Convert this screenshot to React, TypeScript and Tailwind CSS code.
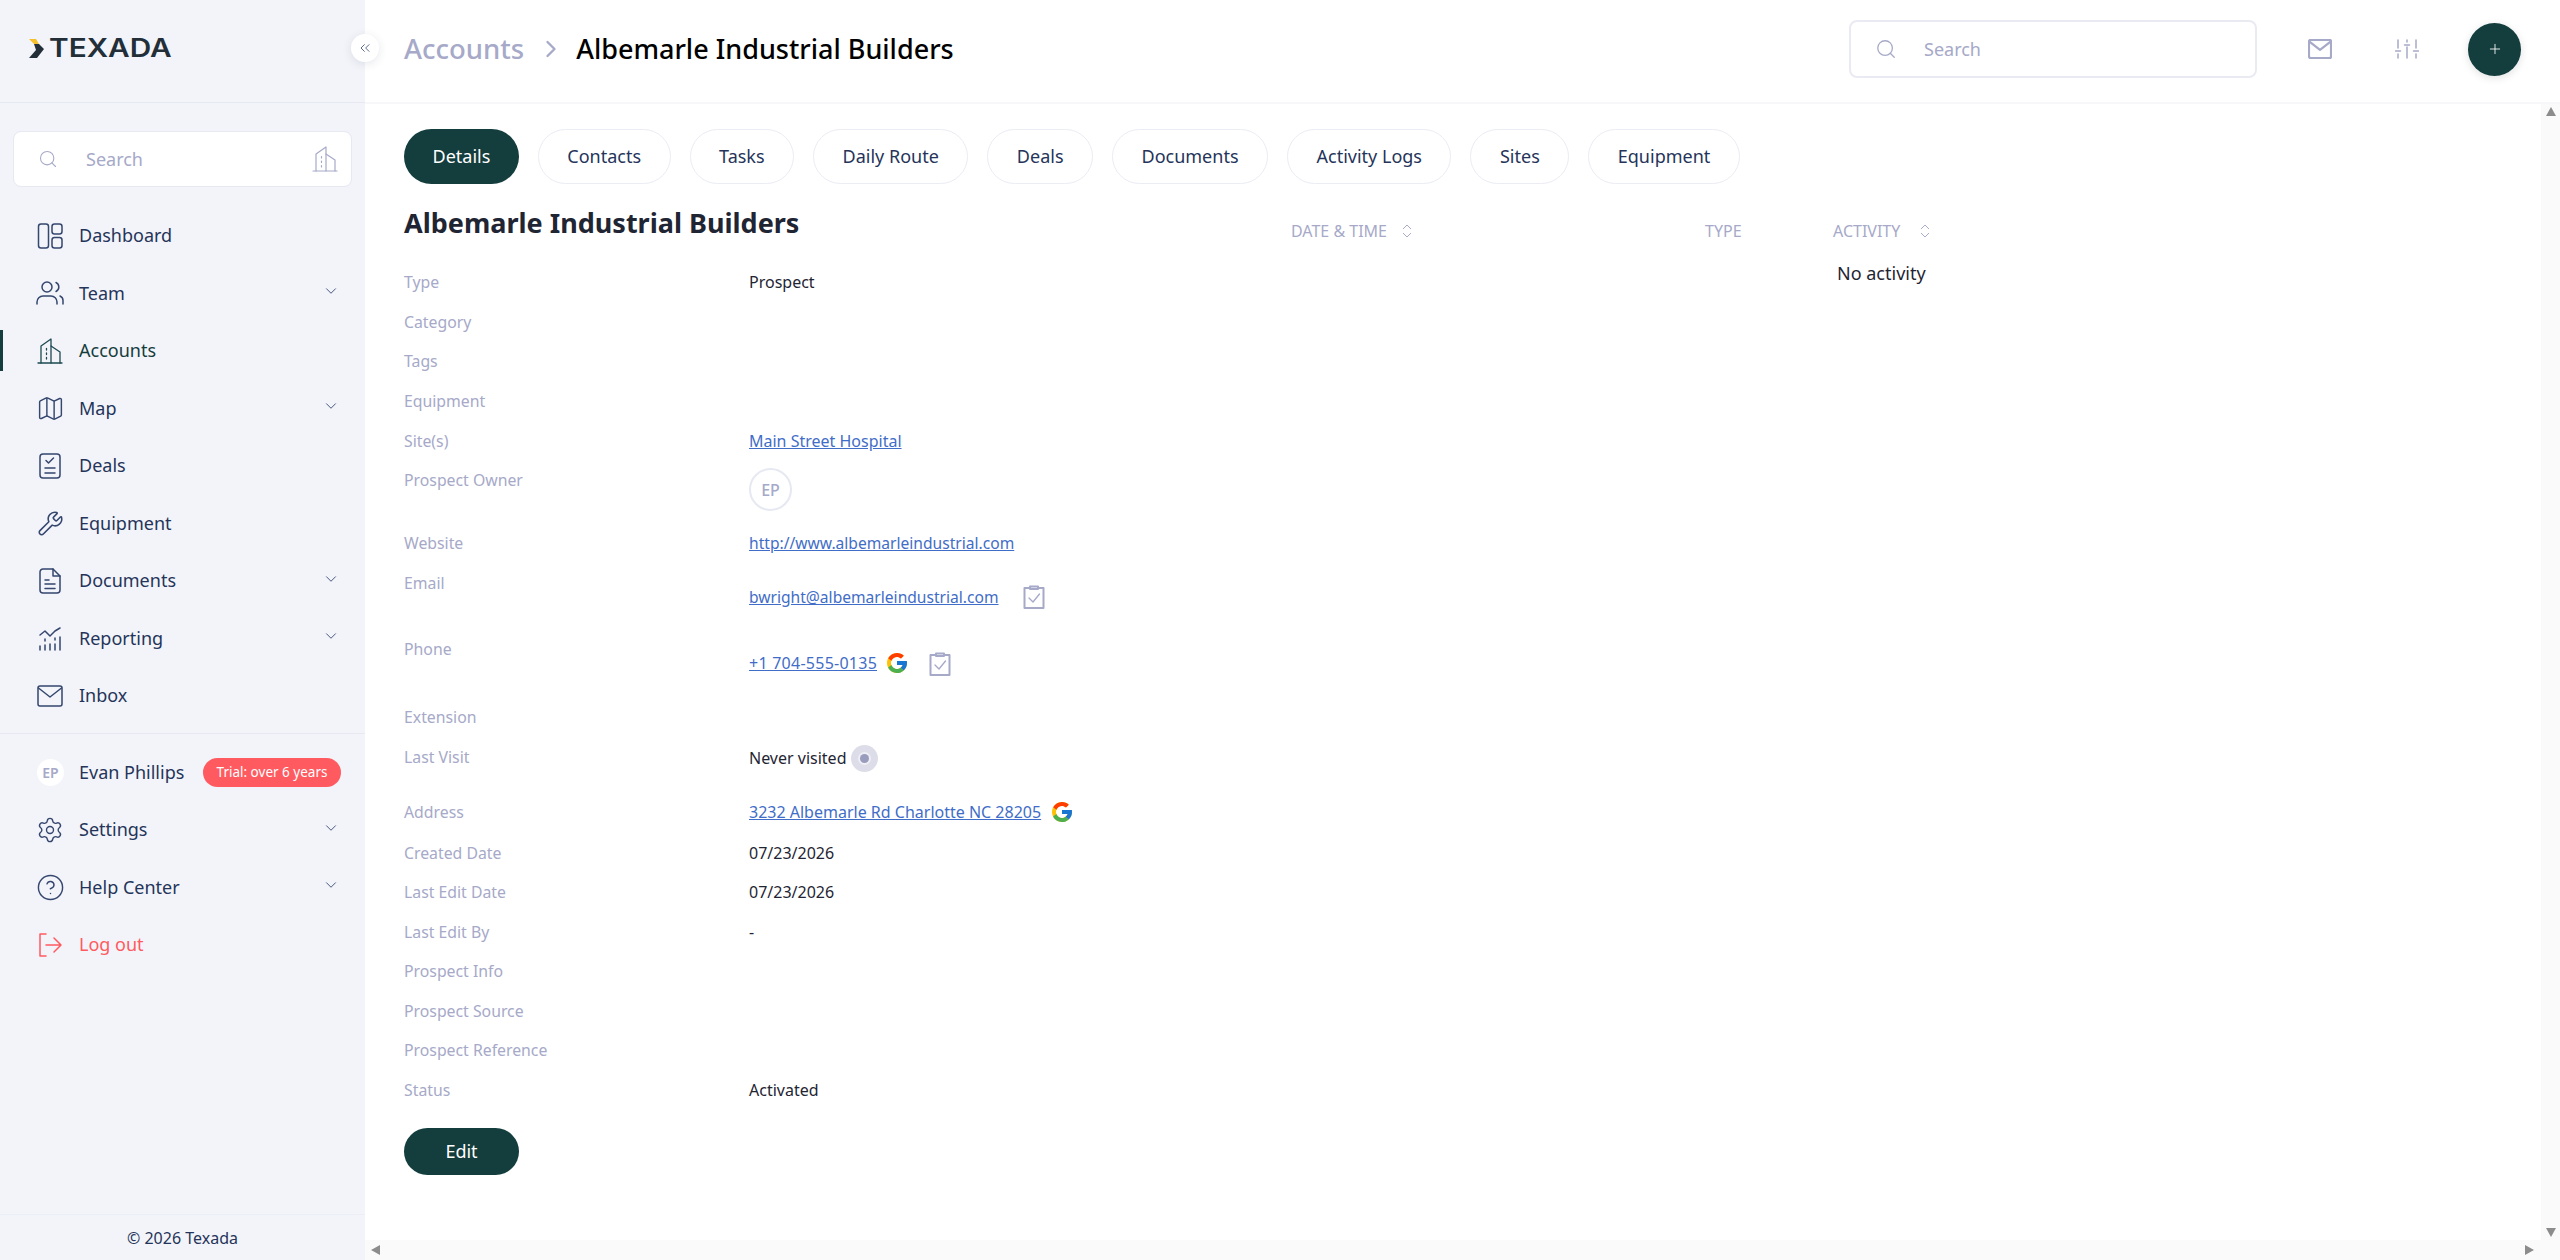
import { ChevronDown, ChevronRight, ChevronsLeft, ChevronsUpDown, CircleHelp, Map as MapIcon, Plus, Search, Settings, Wrench } from "lucide-react";
import type { ReactNode } from "react";
import { FcGoogle } from "react-icons/fc";

const ink = "#35466f";

function Svg({ w = 26, h = 26, children, color = ink, sw = 1.5 }: { w?: number; h?: number; children: ReactNode; color?: string; sw?: number }) {
  return (
    <svg width={w} height={h} viewBox={`0 0 ${w} ${h}`} fill="none" stroke={color} strokeWidth={sw} strokeLinecap="round" strokeLinejoin="round">
      {children}
    </svg>
  );
}

function DashboardIcon() {
  return (
    <Svg>
      <rect x="1.5" y="1" width="10" height="24" rx="2.5" />
      <rect x="15" y="1" width="10" height="10" rx="2.5" />
      <rect x="15" y="14.5" width="10" height="10.5" rx="2.5" />
    </Svg>
  );
}

function TeamIcon() {
  return (
    <Svg w={28} h={24}>
      <circle cx="11" cy="6" r="5" />
      <path d="M1 23v-2a6 6 0 0 1 6-6h8a6 6 0 0 1 6 6v2" />
      <path d="M20 1.5a5 5 0 0 1 0 9" />
      <path d="M24 15a5 5 0 0 1 3 5v3" />
    </Svg>
  );
}

function BuildingIcon({ color = "#1d4a52", sw = 1.3 }: { color?: string; sw?: number }) {
  return (
    <Svg color={color} sw={sw}>
      <path d="M1 25h24" />
      <path d="M4 25V8l10-7v24" />
      <path d="M14 8l9 6v11" />
      <path d="M9.500 10.500v1.500M9.500 15v1.500M9.500 19.500v1.500" />
    </Svg>
  );
}

function DealsIcon() {
  return (
    <Svg>
      <rect x="3" y="1" width="20" height="24" rx="3" />
      <path d="M9 7.500l2.500 2.500 5-5" />
      <path d="M8 15h10M8 20h10" />
    </Svg>
  );
}

function DocumentIcon() {
  return (
    <Svg>
      <path d="M6 1h10l7 7v14a3 3 0 0 1-3 3H6a3 3 0 0 1-3-3V4a3 3 0 0 1 3-3z" />
      <path d="M16 1v7h7" />
      <path d="M8 12h4M8 16h10M8 20.500h10" />
    </Svg>
  );
}

function ReportingIcon() {
  return (
    <Svg>
      <path d="M3 9l5-4 5 5 5-5 5-3" transform="translate(0 1)" />
      <path d="M3 21v4M8 14v2M8 20v5M13 19v6M18 13v2M18 19v6M23 12v13" />
    </Svg>
  );
}

function MailIcon({ color = ink, sw = 1.5 }: { color?: string; sw?: number }) {
  return (
    <Svg w={26} h={22} color={color} sw={sw}>
      <rect x="1" y="1" width="24" height="20" rx="2" />
      <path d="M1.500 3l11.500 9 11.500-9" />
    </Svg>
  );
}

function LogoutIcon() {
  return (
    <Svg w={24} h={24} color="#ff5a5f">
      <path d="M8 1H2v22h6" />
      <path d="M8 12h15M16 5l7 7-7 7" />
    </Svg>
  );
}

function SlidersIcon() {
  return (
    <Svg w={24} h={20} color="#a6a9c8" sw={1.5}>
      <path d="M3 1v8M3 15v4M12 1v2M12 8v11M21 1v8M21 15v4" />
      <path d="M0.500 12h5M9.500 6h5M18.500 12h5" />
    </Svg>
  );
}

function ClipboardIcon() {
  return (
    <Svg w={22} h={25} color="#a6a9c8" sw={2}>
      <path d="M7 4H1.500v20h19V4H15" />
      <path d="M7 2.500h8V5H7z" />
      <path d="M6 14l4 4 6.500-8" strokeWidth="1.300" />
    </Svg>
  );
}

function Triangle({ points }: { points: string }) {
  return (
    <svg width="12" height="12" viewBox="0 0 12 12">
      <polygon points={points} fill="#8c8c8c" />
    </svg>
  );
}

const navMain = [
  { label: "Dashboard", icon: <DashboardIcon /> },
  { label: "Team", icon: <TeamIcon />, more: true },
  { label: "Accounts", icon: <BuildingIcon />, active: true },
  { label: "Map", icon: <MapIcon size={29} strokeWidth={1.2} color="#35466f" />, more: true },
  { label: "Deals", icon: <DealsIcon /> },
  { label: "Equipment", icon: <Wrench size={27} strokeWidth={1.4} color="#35466f" /> },
  { label: "Documents", icon: <DocumentIcon />, more: true },
  { label: "Reporting", icon: <ReportingIcon />, more: true },
  { label: "Inbox", icon: <MailIcon /> },
];

function NavRow({ label, icon, more, active, danger }: { label: string; icon: ReactNode; more?: boolean; active?: boolean; danger?: boolean }) {
  return (
    <a href="#" className={`relative flex h-[57.5px] items-center pl-[34px] pr-[25px] text-[18px] ${danger ? "text-[#ff5a5f]" : active ? "text-[#143d3d]" : "text-[#25345a]"}`}>
      {active && <span className="absolute left-0 top-[8px] h-[41px] w-[3px] bg-[#143d3d]" />}
      <span className="flex w-8 flex-none items-center justify-center">{icon}</span>
      <span className="ml-[13px] flex-1">{label}</span>
      {more && <ChevronDown size={18} strokeWidth={1.2} color="#35466f" className="-mt-1" />}
    </a>
  );
}

function Sidebar() {
  return (
    <aside className="relative flex h-full w-[365px] flex-none flex-col bg-[#f3f4f9]">
      <div className="flex h-[103px] flex-none items-center gap-[5px] border-b border-[#e6e8f2] pb-[6px] pl-[29px]">
        <svg width="15" height="19" viewBox="0 0 15 19">
          <polygon points="0,0 7,0 10,5 5,5" fill="#f5c02c" />
          <polygon points="5,5 10,5 15,10 8,19 0,19 7,11" fill="#232f38" />
        </svg>
        <span className="origin-left scale-x-[1.19] font-['Inter',sans-serif] text-[25px] font-semibold leading-none text-[#232f38]">TEXADA</span>
      </div>
      <button className="absolute left-[351px] top-[34px] flex h-[28px] w-[28px] items-center justify-center rounded-full bg-white shadow-[0_2px_10px_rgba(50,60,100,0.12)]">
        <ChevronsLeft size={16} strokeWidth={1.2} color="#35466f" />
      </button>
      <div className="mx-[13px] mt-[28px] flex h-[56px] flex-none items-center rounded-lg border border-[#e6e8f2] bg-white pl-[24px] pr-[13px]">
        <Search size={20} strokeWidth={1.3} color="#a6a9c8" />
        <span className="ml-[28px] flex-1 text-[18px] text-[#a6a9c8]">Search</span>
        <BuildingIcon color="#a6a9c8" sw={1.2} />
      </div>
      <nav className="mt-[20px] flex-none">
        {navMain.map((item) => (
          <NavRow key={item.label} {...item} />
        ))}
      </nav>
      <div className="mt-[8px] flex-none border-t border-[#e6e8f2] pt-[10px]">
        <div className="flex h-[57.5px] items-center pl-[37px] pr-[24px] text-[18px] text-[#25345a]">
          <span className="flex h-[27px] w-[27px] flex-none items-center justify-center rounded-full bg-white text-[14px] font-semibold text-[#a6a9c8]">EP</span>
          <span className="ml-[15px] flex-1 whitespace-nowrap">Evan Phillips</span>
          <span className="flex h-[29px] w-[138px] flex-none items-center justify-center whitespace-nowrap rounded-full bg-[#ff5a5f] text-[13.500px] text-white">Trial: over 6 years</span>
        </div>
        <NavRow label="Settings" icon={<Settings size={28} strokeWidth={1.2} color="#35466f" />} more />
        <NavRow label="Help Center" icon={<CircleHelp size={29} strokeWidth={1.2} color="#35466f" />} more />
        <NavRow label="Log out" icon={<LogoutIcon />} danger />
      </div>
      <div className="mt-auto flex h-[46px] flex-none items-center justify-center border-t border-[#eceef5] text-[16px] text-[#25345a]">© 2026 Texada</div>
    </aside>
  );
}

function Header() {
  return (
    <header className="flex h-[104px] flex-none items-center border-b-2 border-[#f7f7fa] pb-[4px] pl-[39px]">
      <span className="text-[27.500px] font-medium text-[#a6a9c8]">Accounts</span>
      <ChevronRight size={28} strokeWidth={2} color="#a6a9c8" className="ml-[13px]" />
      <span className="ml-[11px] text-[27px] font-medium text-black">Albemarle Industrial Builders</span>
      <div className="ml-auto flex items-center pr-[39px]">
        <div className="flex h-[58px] w-[408px] items-center rounded-lg border-2 border-[#eaeaf3] pl-[24px]">
          <Search size={22} strokeWidth={1.4} color="#a6a9c8" />
          <span className="ml-[27px] text-[18px] text-[#a6a9c8]">Search</span>
        </div>
        <span className="ml-[50px] block scale-[0.92]">
          <MailIcon color="#a6a9c8" sw={2.4} />
        </span>
        <span className="ml-[62px]">
          <SlidersIcon />
        </span>
        <button className="ml-[49px] flex h-[53px] w-[53px] items-center justify-center rounded-full bg-[#143d3d] shadow-[0_2px_8px_rgba(0,0,0,0.12)]">
          <Plus size={16} strokeWidth={1.3} color="white" />
        </button>
      </div>
    </header>
  );
}

const tabs = ["Details", "Contacts", "Tasks", "Daily Route", "Deals", "Documents", "Activity Logs", "Sites", "Equipment"];

function Tabs() {
  return (
    <div className="flex gap-[19px]">
      {tabs.map((tab, i) => (
        <button key={tab} className={`h-[55px] rounded-full px-[28.500px] text-[18px] ${i === 0 ? "bg-[#143d3d] text-white" : "border border-[#ebecf4] bg-white text-[#25345a]"}`}>
          {tab}
        </button>
      ))}
    </div>
  );
}

function TextLink({ children, className = "" }: { children: ReactNode; className?: string }) {
  return (
    <a href="#" className={`text-[#3f6dc7] underline ${className}`}>
      {children}
    </a>
  );
}

const rows: { label: string; h: string; value?: ReactNode }[] = [
  { label: "Type", h: "h-[39.7px]", value: "Prospect" },
  { label: "Category", h: "h-[39.7px]" },
  { label: "Tags", h: "h-[39.7px]" },
  { label: "Equipment", h: "h-[39.7px]" },
  { label: "Site(s)", h: "h-[39.7px]", value: <TextLink>Main Street Hospital</TextLink> },
  {
    label: "Prospect Owner",
    h: "h-[63px]",
    value: <span className="flex h-[43px] w-[43px] items-center justify-center rounded-full border-2 border-[#e6e8f2] text-[16px] font-medium text-[#a6a9c8]">EP</span>,
  },
  { label: "Website", h: "h-[39.500px]", value: <TextLink className="text-[15.600px]">http://www.albemarleindustrial.com</TextLink> },
  {
    label: "Email",
    h: "h-[66.500px]",
    value: (
      <span className="mt-[13px] flex h-[26px] items-center gap-[24px]">
        <TextLink className="text-[15.600px]">bwright@albemarleindustrial.com</TextLink>
        <ClipboardIcon />
      </span>
    ),
  },
  {
    label: "Phone",
    h: "h-[68px]",
    value: (
      <span className="mt-[13px] flex h-[26px] items-center">
        <TextLink className="tracking-[0.25px]">+1 704-555-0135</TextLink>
        <FcGoogle size={24} className="ml-[8px]" />
        <span className="ml-[20px]">
          <ClipboardIcon />
        </span>
      </span>
    ),
  },
  { label: "Extension", h: "h-[39.500px]" },
  {
    label: "Last Visit",
    h: "h-[55.500px]",
    value: (
      <span className="flex h-[27px] items-center">
        Never visited
        <span className="ml-[5px] flex h-[27px] w-[27px] items-center justify-center rounded-full bg-[#dcdde8]">
          <span className="h-[9px] w-[9px] rounded-full bg-[#9a9cbd] ring-2 ring-[#eeeef5]" />
        </span>
      </span>
    ),
  },
  {
    label: "Address",
    h: "h-[40.500px]",
    value: (
      <span className="flex h-[24px] items-center">
        <TextLink>3232 Albemarle Rd Charlotte NC 28205</TextLink>
        <FcGoogle size={24} className="ml-[9px]" />
      </span>
    ),
  },
  { label: "Created Date", h: "h-[39.500px]", value: "07/23/2026" },
  { label: "Last Edit Date", h: "h-[39.500px]", value: "07/23/2026" },
  { label: "Last Edit By", h: "h-[39.500px]", value: "-" },
  { label: "Prospect Info", h: "h-[39.500px]" },
  { label: "Prospect Source", h: "h-[39.500px]" },
  { label: "Prospect Reference", h: "h-[39.500px]" },
  { label: "Status", h: "h-[39.500px]", value: "Activated" },
];

function Details() {
  return (
    <div className="w-[887px] flex-none">
      <h1 className="mt-[20px] text-[27px] font-bold leading-[38px] text-[#1f2533]">Albemarle Industrial Builders</h1>
      <div className="mt-[28px] text-[16px] leading-[24px]">
        {rows.map((row) => (
          <div key={row.label} className={`grid grid-cols-[345px_1fr] ${row.h}`}>
            <span className="text-[15.800px] text-[#a6a9c8]">{row.label}</span>
            <div className="text-[#1f2533]">{row.value}</div>
          </div>
        ))}
      </div>
      <button className="mt-[10.500px] h-[47px] w-[115px] rounded-full bg-[#143d3d] text-[18px] text-white">Edit</button>
    </div>
  );
}

function Activity() {
  return (
    <div className="mt-[35px] flex-none">
      <div className="grid grid-cols-[414px_128px_auto] text-[16px] leading-[24px] text-[#a6a9c8]">
        <span className="flex items-center">
          DATE &amp; TIME
          <ChevronsUpDown size={18} strokeWidth={1.3} className="ml-[11px]" />
        </span>
        <span>TYPE</span>
        <span className="flex items-center">
          ACTIVITY
          <ChevronsUpDown size={18} strokeWidth={1.3} className="ml-[16px]" />
        </span>
      </div>
      <div className="grid grid-cols-[542px_auto]">
        <span />
        <span className="mt-[18px] pl-[4px] text-[18px] leading-[24px] text-[#1f2533]">No activity</span>
      </div>
    </div>
  );
}

export default function App() {
  return (
    <div className="flex h-screen w-full overflow-hidden bg-white font-['Noto_Sans',sans-serif]">
      <Sidebar />
      <main className="flex min-w-0 flex-1 flex-col">
        <Header />
        <div className="flex min-h-0 flex-1">
          <div className="min-w-0 flex-1 pl-[39px] pt-[25px]">
            <Tabs />
            <div className="flex">
              <Details />
              <Activity />
            </div>
          </div>
          <div className="flex w-[19px] flex-none flex-col items-center justify-between bg-[#fafafa] py-[2px]">
            <Triangle points="6,1 11,10 1,10" />
            <Triangle points="1,2 11,2 6,11" />
          </div>
        </div>
        <div className="flex h-[20px] flex-none items-center justify-between bg-[#fafafa] pl-[5px] pr-[25px]">
          <Triangle points="1,6 10,1 10,11" />
          <Triangle points="2,1 11,6 2,11" />
        </div>
      </main>
    </div>
  );
}
